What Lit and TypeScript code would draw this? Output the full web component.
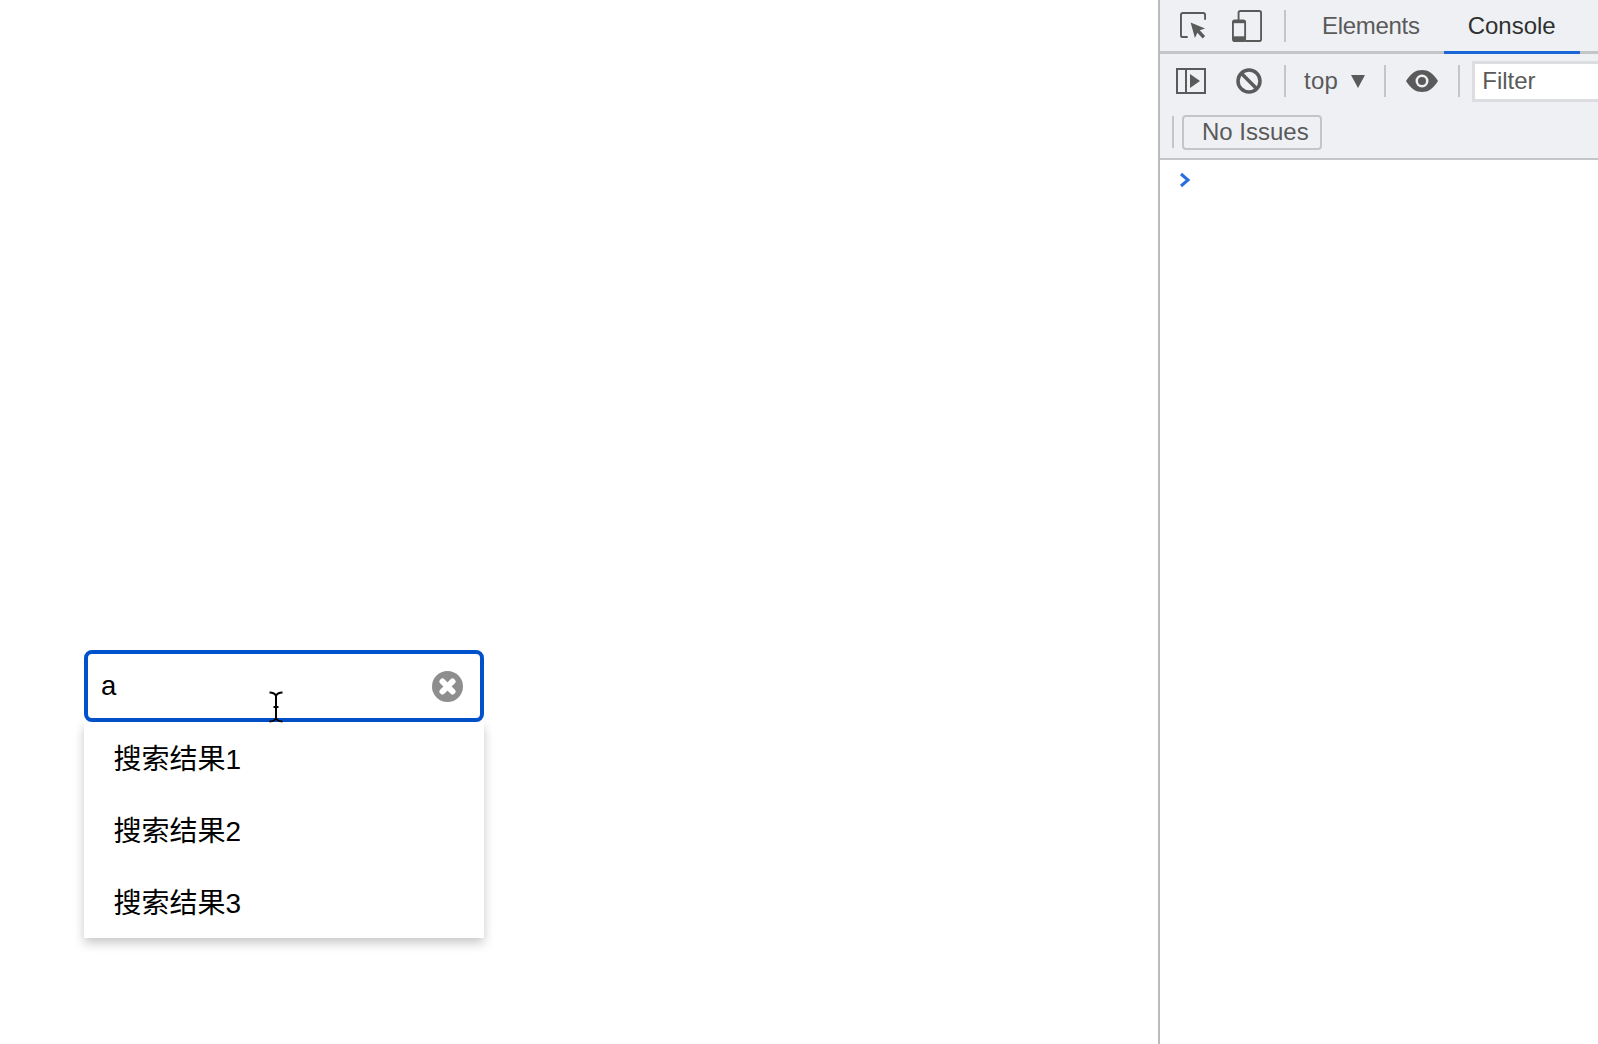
import { LitElement, html, css } from "lit";
import { customElement } from "lit/decorators.js";

@customElement("app-root")
export class AppRoot extends LitElement {
  static styles = css`
    :host {
      display: block;
      width: 1598px;
      height: 1044px;
      overflow: hidden;
      background: #fff;
      font-family: "Liberation Sans", "Noto Sans CJK SC", sans-serif;
    }
    .page { display: flex; height: 1044px; }
    .stage { flex: 0 0 1158px; box-sizing: border-box; padding: 650px 0 0 84px; }
    .search { position: relative; width: 400px; }
    .field {
      box-sizing: border-box;
      height: 72px;
      border: 4px solid #0052cc;
      border-radius: 8px;
      padding: 0 17px 0 13px;
      display: flex;
      align-items: center;
      justify-content: space-between;
      font-size: 28px;
      color: #000;
      background: #fff;
    }
    .field span { font-size: 27.5px; padding-bottom: 1px; }
    .field svg { display: block; }
    .menu {
      background: #fff;
      box-shadow: 0 5px 10px rgba(0, 0, 0, 0.22);
      position: relative;
    }
    .item {
      box-sizing: border-box;
      height: 72px;
      display: flex;
      align-items: center;
      padding: 0 0 3px 29.5px;
      font-size: 28px;
      color: #000;
    }
    .cursor { position: absolute; left: 185px; top: 41px; z-index: 2; display: block; }

    .devtools {
      flex: 1;
      min-width: 0;
      border-left: 2px solid #b9bbbe;
      overflow: hidden;
      color: #5a5a5a;
      font-size: 24px;
    }
    .head { background: #eef0f4; border-bottom: 2px solid #c3c5c8; }
    .tabs {
      height: 51px;
      display: flex;
      align-items: center;
      border-bottom: 3px solid #c3c5c8;
    }
    .tabs svg, .bar svg { display: block; flex: none; }
    .sep { flex: none; width: 2px; height: 32px; background: #c3c5c8; }
    .tab {
      box-sizing: border-box;
      height: 54px;
      margin-bottom: -3px;
      padding: 0 24px 3px;
      display: flex;
      align-items: center;
      white-space: nowrap;
    }
    .tab.elements { letter-spacing: -0.3px; }
    .tab.active { color: #303030; border-bottom: 3px solid #1a66d6; padding-bottom: 0; }
    .bar { display: flex; align-items: center; height: 54px; white-space: nowrap; }
    .bar .top { letter-spacing: 0.3px; }
    .filter {
      flex: none;
      box-sizing: border-box;
      width: 300px;
      height: 41px;
      background: #fff;
      border: 3px solid #dcdde1;
      padding-left: 7px;
      display: flex;
      align-items: center;
    }
    .issues-row { height: 50px; padding-bottom: 2px; box-sizing: border-box; }
    .issues {
      box-sizing: border-box;
      width: 140px;
      height: 35px;
      border: 2px solid #c3c5c8;
      border-radius: 4px;
      padding-left: 18px;
      display: flex;
      align-items: center;
    }
    .console { padding: 12px 0 0 19px; background: #fff; }
    .console svg { display: block; }
  `;

  render() {
    return html`
      <div class="page">
        <main class="stage">
          <div class="search">
            <div class="field">
              <span>a</span>
              <svg width="31" height="31" viewBox="0 0 31 31">
                <circle cx="15.5" cy="15.5" r="15.5" fill="#8e8e8e"></circle>
                <path d="M10.5 10.5 L20.5 20.5 M20.5 10.5 L10.5 20.5" stroke="#fff" stroke-width="6" stroke-linecap="round"></path>
              </svg>
            </div>
            <div class="menu">
              ${["搜索结果1", "搜索结果2", "搜索结果3"].map((t) => html`<div class="item">${t}</div>`)}
            </div>
            <svg class="cursor" width="14" height="32" viewBox="0 0 14 32" fill="none" stroke="#000" stroke-width="2">
              <path d="M0.5 1.5 C3 1.5 6 2.5 7 5 C8 2.5 11 1.5 13.5 1.5"></path>
              <path d="M7 5 V27"></path>
              <path d="M4.5 16 H9.5"></path>
              <path d="M0.5 30.5 C3 30.5 6 29.5 7 27 C8 29.5 11 30.5 13.5 30.5"></path>
            </svg>
          </div>
        </main>

        <aside class="devtools">
          <div class="head">
            <div class="tabs">
              <svg style="margin-left:20px" width="27" height="27" viewBox="0 0 28 28" fill="none">
                <path d="M8 26 H3 Q1 26 1 24 V3 Q1 1 3 1 H24 Q26 1 26 3 V8" stroke="#5a5a5a" stroke-width="2"></path>
                <path d="M11 11 L26 17 L20.5 19 L26 25 L23.5 27.5 L18 21.5 L15.5 27 Z" fill="#5a5a5a"></path>
              </svg>
              <svg style="margin-left:25px" width="30" height="32" viewBox="0 0 32 34" fill="none" stroke="#5a5a5a">
                <path d="M7 11 V3 Q7 1 9 1 H29 Q31 1 31 3 V31 Q31 33 29 33 H14" stroke-width="2"></path>
                <rect x="1" y="11" width="13" height="22" rx="2" stroke-width="2"></rect>
                <rect x="1" y="28" width="13" height="5" fill="#5a5a5a" stroke="none"></rect>
                <rect x="1" y="11" width="13" height="3" fill="#5a5a5a" stroke="none"></rect>
              </svg>
              <div class="sep" style="margin-left:22px;margin-right:12px"></div>
              <div class="tab elements">Elements</div>
              <div class="tab active">Console</div>
            </div>
            <div class="bar">
              <svg style="margin-left:16px" width="30" height="26" viewBox="0 0 30 26" fill="none">
                <rect x="1" y="1" width="28" height="24" stroke="#5a5a5a" stroke-width="2"></rect>
                <path d="M10 1 V25" stroke="#5a5a5a" stroke-width="2"></path>
                <path d="M14 6 L24 13 L14 20 Z" fill="#5a5a5a"></path>
              </svg>
              <svg style="margin-left:30px" width="26" height="26" viewBox="0 0 26 26" fill="none" stroke="#5a5a5a" stroke-width="3.5">
                <circle cx="13" cy="13" r="11"></circle>
                <path d="M5.5 5.5 L20.5 20.5"></path>
              </svg>
              <div class="sep" style="margin-left:22px;margin-right:18px"></div>
              <span class="top">top</span>
              <svg style="margin-left:13px" width="14" height="13" viewBox="0 0 14 13"><path d="M0 0 H14 L7 13 Z" fill="#5a5a5a"></path></svg>
              <div class="sep" style="margin-left:19px;margin-right:20px"></div>
              <svg width="32" height="22" viewBox="0 0 32 22">
                <path d="M0 11 C5 3 10 0 16 0 C22 0 27 3 32 11 C27 19 22 22 16 22 C10 22 5 19 0 11 Z" fill="#5a5a5a"></path>
                <circle cx="16" cy="11" r="6.5" fill="#eef0f4"></circle>
                <circle cx="16" cy="11" r="4" fill="#5a5a5a"></circle>
              </svg>
              <div class="sep" style="margin-left:20px;margin-right:12px"></div>
              <div class="filter">Filter</div>
            </div>
            <div class="bar issues-row">
              <div class="sep" style="margin-left:12px;margin-right:8px"></div>
              <div class="issues">No Issues</div>
            </div>
          </div>
          <div class="console">
            <svg width="12" height="16" viewBox="0 0 12 16" fill="none">
              <path d="M2 2 L9 8 L2 14" stroke="#2a6fdb" stroke-width="3"></path>
            </svg>
          </div>
        </aside>
      </div>
    `;
  }
}
